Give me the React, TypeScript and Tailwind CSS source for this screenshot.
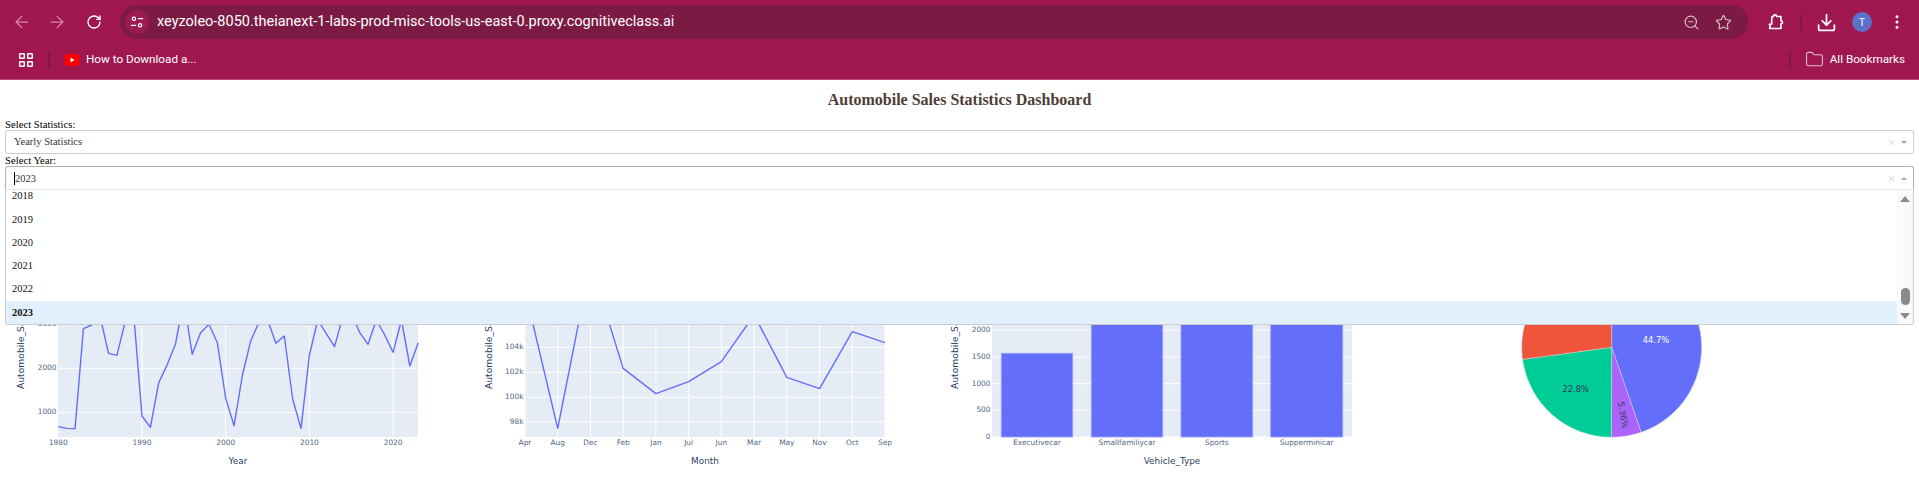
import { ArrowLeft, ArrowRight, RotateCw, Star, ZoomOut, Download, MoreVertical, Folder, X } from "lucide-react";

const blue = "#636efa";
const tick = "#506784";
const axis = "#2a3f5f";
const plotFont = "'DejaVu Sans', sans-serif";

// y values are read off the reference at 3x, relative to y=300
const yearly = [380, 385, 386, 86, 75, 50, 160, 166, 65, 40, 348, 382, 248, 195, 132, 0, 163, 98, 73, 128, 295, 377, 225, 122, 65, 60, 130, 108, 297, 385, 165, 60, 100, 140, 50, 40, 97, 133, 60, 105, 157, 60, 198, 128];
const monthly = [-28, 385, -110, 205, 281, 245, 185, 45, 232, 266, 95, 128];
const months = ["Apr", "Aug", "Dec", "Feb", "Jan", "Jul", "Jun", "Mar", "May", "Nov", "Oct", "Sep"];

const toY = (z: number) => 300 + z / 3;

function TickText({ x, y, children, anchor = "middle" }: { x: number; y: number; children: string; anchor?: "middle" | "end" }) {
  return (
    <text x={x} y={y} textAnchor={anchor} dominantBaseline="middle" fill={tick} fontSize="7.4" fontFamily={plotFont}>
      {children}
    </text>
  );
}

function AxisTitle({ x, y, children }: { x: number; y: number; children: string }) {
  return (
    <text x={x} y={y} textAnchor="middle" dominantBaseline="middle" fill={axis} fontSize="8.9" fontFamily={plotFont}>
      {children}
    </text>
  );
}

function YTitle({ x }: { x: number }) {
  return (
    <text transform={`translate(${x} 389) rotate(-90)`} dominantBaseline="middle" fill={axis} fontSize="9.2" fontFamily={plotFont}>
      Automobile_Sales
    </text>
  );
}

function YearChart() {
  const pts = yearly.map((z, i) => `${58.3 + i * 8.37},${toY(z)}`).join(" ");
  return (
    <svg viewBox="0 190 467 298" className="w-[467px] h-[298px] shrink-0">
      <rect x="58" y="190" width="360" height="247" fill="#e5ecf6" />
      {[1000, 2000, 3000].map((v, i) => (
        <g key={v}>
          <line x1="58" x2="418" y1={412.3 - i * 44} y2={412.3 - i * 44} stroke="white" />
          <TickText x={56.5} y={412.3 - i * 44} anchor="end">{String(v)}</TickText>
        </g>
      ))}
      {[1990, 2000, 2010, 2020].map((v) => (
        <line key={v} x1={58.3 + (v - 1980) * 8.37} x2={58.3 + (v - 1980) * 8.37} y1="190" y2="437" stroke="white" />
      ))}
      <polyline points={pts} fill="none" stroke={blue} strokeWidth="1.4" strokeLinejoin="round" />
      {[1980, 1990, 2000, 2010, 2020].map((v) => (
        <TickText key={v} x={58.3 + (v - 1980) * 8.37} y={443}>{String(v)}</TickText>
      ))}
      <YTitle x={21} />
      <AxisTitle x={238} y={461.5}>Year</AxisTitle>
    </svg>
  );
}

function MonthChart() {
  const step = 360 / 11;
  const pts = monthly.map((z, i) => `${58 + i * step},${toY(z)}`).join(" ");
  return (
    <svg viewBox="0 190 467 298" className="w-[467px] h-[298px] shrink-0">
      <rect x="58" y="190" width="360" height="247" fill="#e5ecf6" />
      {[["104k", 347.3], ["102k", 372.3], ["100k", 397.3], ["98k", 421.7]].map(([t, y]) => (
        <g key={t as string}>
          <line x1="58" x2="418" y1={y as number} y2={y as number} stroke="white" />
          <TickText x={56.5} y={y as number} anchor="end">{t as string}</TickText>
        </g>
      ))}
      {months.map((m, i) => (
        <g key={m}>
          <line x1={58 + i * step} x2={58 + i * step} y1="190" y2="437" stroke="white" />
          <TickText x={58 + i * step} y={443}>{m}</TickText>
        </g>
      ))}
      <polyline points={pts} fill="none" stroke={blue} strokeWidth="1.4" strokeLinejoin="round" />
      <YTitle x={22} />
      <AxisTitle x={238} y={461.5}>Month</AxisTitle>
    </svg>
  );
}

function TypeChart() {
  const bars: [string, number, number, number][] = [
    ["Executivecar", 9.3, 71.4, 353.3],
    ["Smallfamiliycar", 99.3, 71.4, 190],
    ["Sports", 189, 71.7, 190],
    ["Supperminicar", 278.7, 72, 190],
  ];
  return (
    <svg viewBox="0 190 467 298" className="w-[467px] h-[298px] shrink-0">
      <rect x="58" y="190" width="360" height="247" fill="#e5ecf6" />
      {[0, 500, 1000, 1500, 2000].map((v) => {
        const y = 437 - v * 0.05335;
        return (
          <g key={v}>
            <line x1="58" x2="418" y1={y} y2={y} stroke="white" />
            <TickText x={56.5} y={y} anchor="end">{String(v)}</TickText>
          </g>
        );
      })}
      {bars.map(([name, x, w, top]) => (
        <g key={name}>
          <rect x={58 + x} y={top} width={w} height={437 - top} fill={blue} stroke="#9aa1fb" strokeWidth="0.9" />
          <TickText x={58 + x + w / 2} y={443}>{name}</TickText>
        </g>
      ))}
      <YTitle x={21} />
      <AxisTitle x={238} y={461}>Vehicle_Type</AxisTitle>
    </svg>
  );
}

function slice(from: number, to: number) {
  const cx = 210.7;
  const cy = 347.3;
  const r = 90;
  const at = (d: number) => {
    const a = (d * Math.PI) / 180;
    return `${cx + r * Math.sin(a)} ${cy - r * Math.cos(a)}`;
  };
  return `M${cx} ${cy} L${at(from)} A${r} ${r} 0 ${to - from > 180 ? 1 : 0} 1 ${at(to)} Z`;
}

function PieChart() {
  const parts: [number, number, string][] = [
    [0, 160.9, "#636efa"],
    [160.9, 180.2, "#ab63fa"],
    [180.2, 262.3, "#00cc96"],
    [262.3, 360, "#ef553b"],
  ];
  return (
    <svg viewBox="0 190 467 298" className="w-[467px] h-[298px] shrink-0">
      {parts.map(([a, b, c]) => (
        <path key={c} d={slice(a, b)} fill={c} stroke="#e5e7eb" strokeWidth="0.4" />
      ))}
      <text x={255} y={340} textAnchor="middle" dominantBaseline="middle" fill="white" fontSize="8.4" fontFamily={plotFont}>44.7%</text>
      <text x={174.7} y={389} textAnchor="middle" dominantBaseline="middle" fill={axis} fontSize="8.4" fontFamily={plotFont}>22.8%</text>
      <text transform="translate(221.7 415) rotate(80)" textAnchor="middle" dominantBaseline="middle" fill={axis} fontSize="8.4" fontFamily={plotFont}>5.36%</text>
    </svg>
  );
}

function TuneIcon() {
  return (
    <svg width="14" height="14" viewBox="0 0 16 16" fill="none" stroke="white" strokeWidth="1.4">
      <circle cx="4.5" cy="4.2" r="1.9" />
      <path d="M9 4.2h6M1 11.8h6" />
      <circle cx="11.5" cy="11.8" r="1.9" />
    </svg>
  );
}

function AppsIcon() {
  return (
    <svg width="16" height="16" viewBox="0 0 16 16" fill="none" stroke="white" strokeWidth="1.5">
      <rect x="1.7" y="1.7" width="4.6" height="4.6" rx="0.6" />
      <rect x="9.7" y="1.7" width="4.6" height="4.6" rx="0.6" />
      <rect x="1.7" y="9.7" width="4.6" height="4.6" rx="0.6" />
      <rect x="9.7" y="9.7" width="4.6" height="4.6" rx="0.6" />
    </svg>
  );
}

function PuzzleIcon() {
  return (
    <svg width="18" height="18" viewBox="0 0 18 18" fill="none" stroke="white" strokeWidth="1.6" strokeLinejoin="round">
      <path d="M6 3.5h1.5a1.6 1.6 0 0 1 3.2 0h4.2v4.2a1.6 1.6 0 0 1 0 3.2v4.6H3.5c.8-1.2.8-3-.2-4.2h2.4V8c0-1 .2-3 .3-4.5z" />
    </svg>
  );
}

function Chevron({ up }: { up?: boolean }) {
  return up ? (
    <span className="w-0 h-0 border-x-[3.5px] border-x-transparent border-b-[3px] border-b-[#aaa]" />
  ) : (
    <span className="w-0 h-0 border-x-[3.5px] border-x-transparent border-t-[3px] border-t-[#aaa]" />
  );
}

function SelectEnd({ up }: { up?: boolean }) {
  return (
    <div className="flex items-center gap-[5px] text-[#999]">
      <X size={9} strokeWidth={1} />
      <Chevron up={up} />
    </div>
  );
}

export default function App() {
  return (
    <div className="h-[488px] w-full overflow-hidden bg-white font-['Liberation_Serif',serif]">
      {/* browser chrome */}
      <div className="h-[80px] bg-[#a0174f] border-b border-[#c04a78] font-['Roboto',sans-serif] text-white">
        <div className="h-[40px] flex items-center pt-[4px]">
          <div className="flex items-center w-[120px] pl-[12px] gap-[15px]">
            <ArrowLeft size={20} strokeWidth={1.5} className="text-[#d28aa6]" />
            <ArrowRight size={20} strokeWidth={1.5} className="text-[#d28aa6]" />
            <RotateCw size={16} strokeWidth={2} className="ml-[4px]" />
          </div>
          <div className="w-[1628px] h-[34px] rounded-full bg-[#7b1a42] flex items-center pl-[5px] pr-[16px]">
            <div className="w-[24px] h-[24px] rounded-full bg-[#9c1b50] flex items-center justify-center">
              <TuneIcon />
            </div>
            <span className="ml-[8px] text-[14.5px]">xeyzoleo-8050.theianext-1-labs-prod-misc-tools-us-east-0.proxy.cognitiveclass.ai</span>
            <div className="ml-auto flex items-center gap-[15px] text-[#d9c3cd]">
              <ZoomOut size={17} strokeWidth={1.6} />
              <Star size={17} strokeWidth={1.6} />
            </div>
          </div>
          <div className="flex items-center flex-1 pl-[18px]">
            <PuzzleIcon />
            <div className="w-[2px] h-[16px] bg-[#7b1a42] ml-[16px] mr-[13.5px]" />
            <Download size={21} strokeWidth={2} />
            <div className="ml-[15.5px] w-[20px] h-[20px] rounded-full bg-[#5b70c9] flex items-center justify-center text-[10px]">T</div>
            <MoreVertical size={18} strokeWidth={2} className="ml-[16px]" />
          </div>
        </div>
        <div className="h-[39px] flex items-center pl-[18px] pr-[14px] text-[11.7px]">
          <AppsIcon />
          <div className="w-[2px] h-[16px] bg-[#7b1a42] ml-[14px] mr-[14px]" />
          <svg width="16" height="16" viewBox="0 0 16 16">
            <rect x="0.5" y="2" width="15" height="12" rx="3" fill="#f00" />
            <path d="M6.5 5.7v4.6L10.5 8z" fill="white" />
          </svg>
          <span className="ml-[6px]">How to Download a...</span>
          <div className="ml-auto w-[2px] h-[16px] bg-[#7b1a42] mr-[14px]" />
          <Folder size={19} strokeWidth={1.3} className="text-[#d9c3cd]" />
          <span className="ml-[6px]">All Bookmarks</span>
        </div>
      </div>

      {/* page */}
      <h1 className="h-[38px] pt-[2px] flex items-center justify-center text-[16px] font-bold text-[#503d36]">
        Automobile Sales Statistics Dashboard
      </h1>
      <div className="px-[5px] text-[10.7px] leading-[12px] text-black">
        <div>Select Statistics:</div>
        <div className="h-[24px] border border-[#ccc] rounded-[3px] flex items-center justify-between pl-[8px] pr-[6px] text-[#333] text-[10.5px]">
          <span>Yearly Statistics</span>
          <SelectEnd />
        </div>
        <div>Select Year:</div>
        <div className="relative">
          <div className="h-[24px] border border-[#b3b3b3] border-b-[#e6e6e6] rounded-t-[3px] flex items-center justify-between pl-[8px] pr-[6px] text-[#333] text-[10.5px]">
            <span className="border-l border-black leading-[13px]">2023</span>
            <SelectEnd up />
          </div>
          <div className="absolute top-full inset-x-0 h-[135px] z-10 bg-white border-x border-b border-[#ccc] rounded-b-[3px] overflow-hidden flex">
            <div className="flex-1 -mt-[5.4px] text-[10.5px] text-[#111]">
              {["2018", "2019", "2020", "2021", "2022"].map((y) => (
                <div key={y} className="h-[23.3px] flex items-center pl-[6px]">{y}</div>
              ))}
              <div className="h-[23.3px] flex items-center pl-[6px] font-bold bg-[#e2f0fd]">2023</div>
            </div>
            <div className="w-[16px] bg-[#fafafa] flex flex-col items-center pt-[6px] pb-[5px]">
              <span className="w-0 h-0 border-x-[5.5px] border-x-transparent border-b-[6.5px] border-b-[#8a8a8a]" />
              <div className="flex flex-col items-center gap-[8px] mt-auto">
                <div className="w-[9px] h-[17px] rounded-full bg-[#8a8a8a]" />
                <span className="w-0 h-0 border-x-[5.5px] border-x-transparent border-t-[6.5px] border-t-[#8a8a8a]" />
              </div>
            </div>
          </div>
        </div>
      </div>

      {/* charts, hidden under the open menu down to y=324 */}
      <div className="flex">
        <YearChart />
        <MonthChart />
        <TypeChart />
        <PieChart />
      </div>
    </div>
  );
}
